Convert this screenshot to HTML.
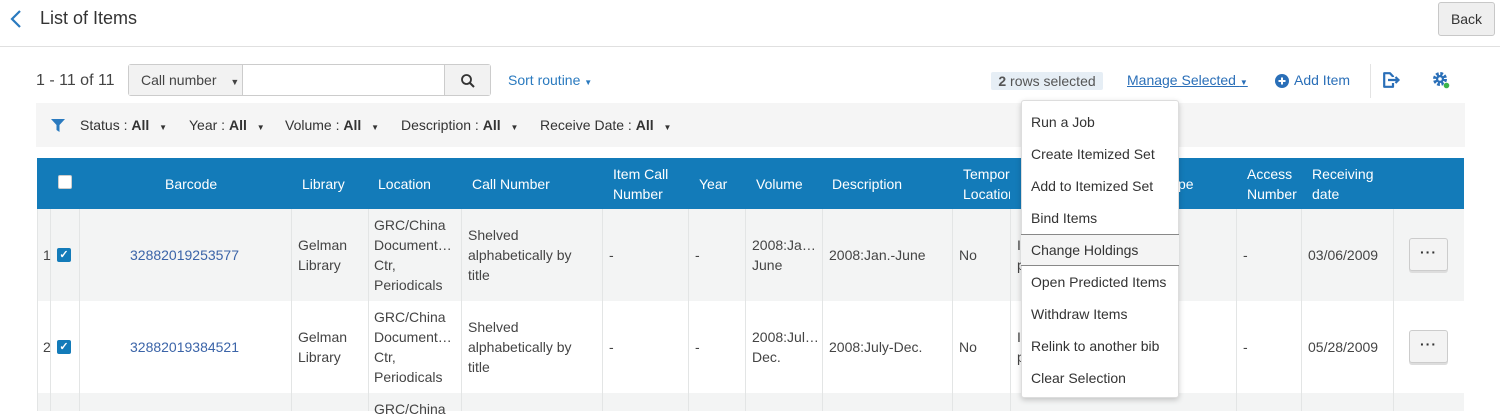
<!DOCTYPE html>
<html><head><style>
*{box-sizing:border-box;margin:0;padding:0}
body{width:1500px;height:411px;overflow:hidden;background:#fff;font-family:"Liberation Sans",sans-serif;color:#3a3a3a;font-size:14px;position:relative}
.a{position:absolute;white-space:nowrap}
.th{position:absolute;color:#fff;font-size:14px;line-height:20px}
.cell{position:absolute;line-height:20px;font-size:14px;color:#444}
.vl{position:absolute;width:1px;background:#e3e5e5}
.mi{position:absolute;left:1021px;width:158px;height:32px;line-height:32px;padding-left:10px;font-size:14px;color:#333}
.cb{position:absolute;width:14px;height:14px;border-radius:2px}
.dots{position:absolute;width:39px;height:33px;border:1px solid #ccc;border-radius:3px;background:#f3f3f3;box-shadow:0 2px 0 #ddd;text-align:center;line-height:26px;font-weight:bold;font-size:14px;color:#333;letter-spacing:1px}
</style></head><body>
<svg class="a" style="left:9px;top:9px" width="14" height="20" viewBox="0 0 14 20"><path d="M11 2 L3 10 L11 18" fill="none" stroke="#2a7abf" stroke-width="2.2"/></svg>
<div class="a" style="left:40px;top:8px;font-size:18px;color:#333">List of Items</div>
<div class="a" style="left:1438px;top:2px;width:57px;height:34px;border:1px solid #c8c8c8;border-radius:3px;background:#efefef;text-align:center;line-height:32px;font-size:14px;color:#333">Back</div>
<div class="a" style="left:0;top:46px;width:1500px;height:1px;background:#e0e0e0"></div>

<div class="a" style="left:36px;top:72px;font-size:16px;color:#444">1 - 11 of 11</div>
<div class="a" style="left:128px;top:64px;width:363px;height:32px;border:1px solid #ccc;border-radius:3px;background:#fff"></div>
<div class="a" style="left:129px;top:65px;width:114px;height:30px;background:#f2f2f2;border-right:1px solid #ccc;line-height:30px;padding-left:12px;color:#444">Call number <span style="font-size:9px;margin-left:10px">▼</span></div>
<div class="a" style="left:444px;top:65px;width:46px;height:30px;background:#f2f2f2;border-left:1px solid #ccc"></div>
<svg class="a" style="left:460px;top:73px" width="16" height="16" viewBox="0 0 16 16"><circle cx="6.5" cy="6.5" r="4.5" fill="none" stroke="#333" stroke-width="1.8"/><path d="M10 10 L14 14" stroke="#333" stroke-width="2"/></svg>
<div class="a" style="left:508px;top:72px;color:#2a7abf">Sort routine <span style="font-size:8px">▼</span></div>

<div class="a" style="left:991px;top:72px;width:112px;height:18px;background:#e6eef5;border-radius:2px;text-align:center;line-height:18px;color:#555"><b>2</b> rows selected</div>
<div class="a" style="left:1127px;top:72px;color:#2a6fb8;text-decoration:underline">Manage Selected <span style="font-size:8px;text-decoration:none">▼</span></div>
<svg class="a" style="left:1275px;top:74px" width="14" height="14" viewBox="0 0 14 14"><circle cx="7" cy="7" r="7" fill="#2a6fb8"/><path d="M7 3.5V10.5M3.5 7H10.5" stroke="#fff" stroke-width="2"/></svg>
<div class="a" style="left:1294px;top:72px;color:#2a6fb8">Add Item</div>
<div class="a" style="left:1370px;top:64px;width:1px;height:34px;background:#e3e3e3"></div>
<svg class="a" style="left:1383px;top:72px" width="18" height="16" viewBox="0 0 18 16"><path d="M10 5V4.5L7 1.2H1.2V14.8H10V11" fill="none" stroke="#2a6fb8" stroke-width="2.2" stroke-linejoin="round"/><path d="M5 8H15M12.5 5L15.5 8L12.5 11" fill="none" stroke="#2a6fb8" stroke-width="2.2"/></svg>
<svg class="a" style="left:1432px;top:71px" width="20" height="19" viewBox="0 0 20 19"><circle cx="8" cy="8" r="5.2" fill="none" stroke="#2a6fb8" stroke-width="3.6" stroke-dasharray="2.6 1.5"/><circle cx="8" cy="8" r="4" fill="#2a6fb8"/><circle cx="8" cy="8" r="1.8" fill="#fff"/><circle cx="14.5" cy="14.5" r="3.2" fill="#fff"/><circle cx="14.5" cy="14.5" r="2.8" fill="#3bb34a"/></svg>

<div class="a" style="left:36px;top:103px;width:1429px;height:44px;background:#f5f5f5"></div>
<svg class="a" style="left:51px;top:119px" width="14" height="13" viewBox="0 0 14 13"><path d="M0 0H14L8.5 6V13L5.5 11V6Z" fill="#2a7abf"/></svg>
<div class="a" style="left:80px;top:117px;color:#333">Status : <b>All</b> <span style="font-size:8px;margin-left:6px">▼</span></div>
<div class="a" style="left:189px;top:117px;color:#333">Year : <b>All</b> <span style="font-size:8px;margin-left:6px">▼</span></div>
<div class="a" style="left:285px;top:117px;color:#333">Volume : <b>All</b> <span style="font-size:8px;margin-left:6px">▼</span></div>
<div class="a" style="left:401px;top:117px;color:#333">Description : <b>All</b> <span style="font-size:8px;margin-left:6px">▼</span></div>
<div class="a" style="left:540px;top:117px;color:#333">Receive Date : <b>All</b> <span style="font-size:8px;margin-left:6px">▼</span></div>

<div class="a" style="left:37px;top:158px;width:1427px;height:51px;background:#137bb9"></div>
<div class="cb" style="left:58px;top:175px;background:#fff;border:1px solid #ccc"></div>
<div class="th" style="left:165px;top:174px">Barcode</div>
<div class="th" style="left:302px;top:174px">Library</div>
<div class="th" style="left:378px;top:174px">Location</div>
<div class="th" style="left:472px;top:174px">Call Number</div>
<div class="th" style="left:613px;top:164px">Item Call<br>Number</div>
<div class="th" style="left:699px;top:174px">Year</div>
<div class="th" style="left:756px;top:174px">Volume</div>
<div class="th" style="left:832px;top:174px">Description</div>
<div class="th" style="left:963px;top:164px;width:47px;overflow:hidden">Temporary<br>Location</div>
<div class="th" style="left:1178px;top:174px">pe</div>
<div class="th" style="left:1247px;top:164px">Access<br>Number</div>
<div class="th" style="left:1312px;top:164px">Receiving<br>date</div>

<div class="a" style="left:37px;top:209px;width:1427px;height:92px;background:#f3f4f4"></div>
<div class="a" style="left:37px;top:393px;width:1427px;height:18px;background:#f3f4f4"></div>
<div class="a" style="left:37px;top:301px;width:1427px;height:92px;background:#fff"></div>
<div class="vl" style="left:37px;top:209px;height:202px"></div>
<div class="vl" style="left:50px;top:209px;height:202px"></div>
<div class="vl" style="left:79px;top:209px;height:202px"></div>
<div class="vl" style="left:291px;top:209px;height:202px"></div>
<div class="vl" style="left:368px;top:209px;height:202px"></div>
<div class="vl" style="left:461px;top:209px;height:202px"></div>
<div class="vl" style="left:602px;top:209px;height:202px"></div>
<div class="vl" style="left:688px;top:209px;height:202px"></div>
<div class="vl" style="left:745px;top:209px;height:202px"></div>
<div class="vl" style="left:822px;top:209px;height:202px"></div>
<div class="vl" style="left:952px;top:209px;height:202px"></div>
<div class="vl" style="left:1010px;top:209px;height:202px"></div>
<div class="vl" style="left:1236px;top:209px;height:202px"></div>
<div class="vl" style="left:1301px;top:209px;height:202px"></div>
<div class="vl" style="left:1393px;top:209px;height:202px"></div>

<div class="cell" style="left:43px;top:245px">1</div>
<div class="cb" style="left:57px;top:248px;background:#137bb9;color:#fff;font-size:11px;line-height:14px;text-align:center;font-weight:bold">✓</div>
<div class="cell" style="left:130px;top:245px;color:#3b64a8">32882019253577</div>
<div class="cell" style="left:298px;top:235px">Gelman<br>Library</div>
<div class="cell" style="left:374px;top:215px;width:85px;overflow:hidden">GRC/China<br>Document…<br>Ctr,<br>Periodicals</div>
<div class="cell" style="left:468px;top:225px">Shelved<br>alphabetically by<br>title</div>
<div class="cell" style="left:609px;top:245px">-</div>
<div class="cell" style="left:695px;top:245px">-</div>
<div class="cell" style="left:752px;top:235px">2008:Ja…<br>June</div>
<div class="cell" style="left:829px;top:245px">2008:Jan.-June</div>
<div class="cell" style="left:959px;top:245px">No</div>
<div class="cell" style="left:1017px;top:235px">I<br>p</div>
<div class="cell" style="left:1243px;top:245px">-</div>
<div class="cell" style="left:1308px;top:245px">03/06/2009</div>
<div class="dots" style="left:1409px;top:238px">···</div>

<div class="cell" style="left:43px;top:337px">2</div>
<div class="cb" style="left:57px;top:340px;background:#137bb9;color:#fff;font-size:11px;line-height:14px;text-align:center;font-weight:bold">✓</div>
<div class="cell" style="left:130px;top:337px;color:#3b64a8">32882019384521</div>
<div class="cell" style="left:298px;top:327px">Gelman<br>Library</div>
<div class="cell" style="left:374px;top:307px;width:85px;overflow:hidden">GRC/China<br>Document…<br>Ctr,<br>Periodicals</div>
<div class="cell" style="left:468px;top:317px">Shelved<br>alphabetically by<br>title</div>
<div class="cell" style="left:609px;top:337px">-</div>
<div class="cell" style="left:695px;top:337px">-</div>
<div class="cell" style="left:752px;top:327px">2008:Jul…<br>Dec.</div>
<div class="cell" style="left:829px;top:337px">2008:July-Dec.</div>
<div class="cell" style="left:959px;top:337px">No</div>
<div class="cell" style="left:1017px;top:327px">I<br>p</div>
<div class="cell" style="left:1243px;top:337px">-</div>
<div class="cell" style="left:1308px;top:337px">05/28/2009</div>
<div class="dots" style="left:1409px;top:330px">···</div>
<div class="cell" style="left:374px;top:399px">GRC/China</div>

<div class="a" style="left:1021px;top:100px;width:158px;height:298px;background:#fff;border:1px solid #ddd;border-radius:3px;box-shadow:0 2px 6px rgba(0,0,0,.2)"></div>
<div class="mi" style="top:106px">Run a Job</div>
<div class="mi" style="top:138px">Create Itemized Set</div>
<div class="mi" style="top:170px">Add to Itemized Set</div>
<div class="mi" style="top:202px">Bind Items</div>
<div class="mi" style="top:234px;background:#f4f4f4;border-top:1px solid #888;border-bottom:1px solid #888;line-height:30px">Change Holdings</div>
<div class="mi" style="top:266px">Open Predicted Items</div>
<div class="mi" style="top:298px">Withdraw Items</div>
<div class="mi" style="top:330px">Relink to another bib</div>
<div class="mi" style="top:362px">Clear Selection</div>
</body></html>
